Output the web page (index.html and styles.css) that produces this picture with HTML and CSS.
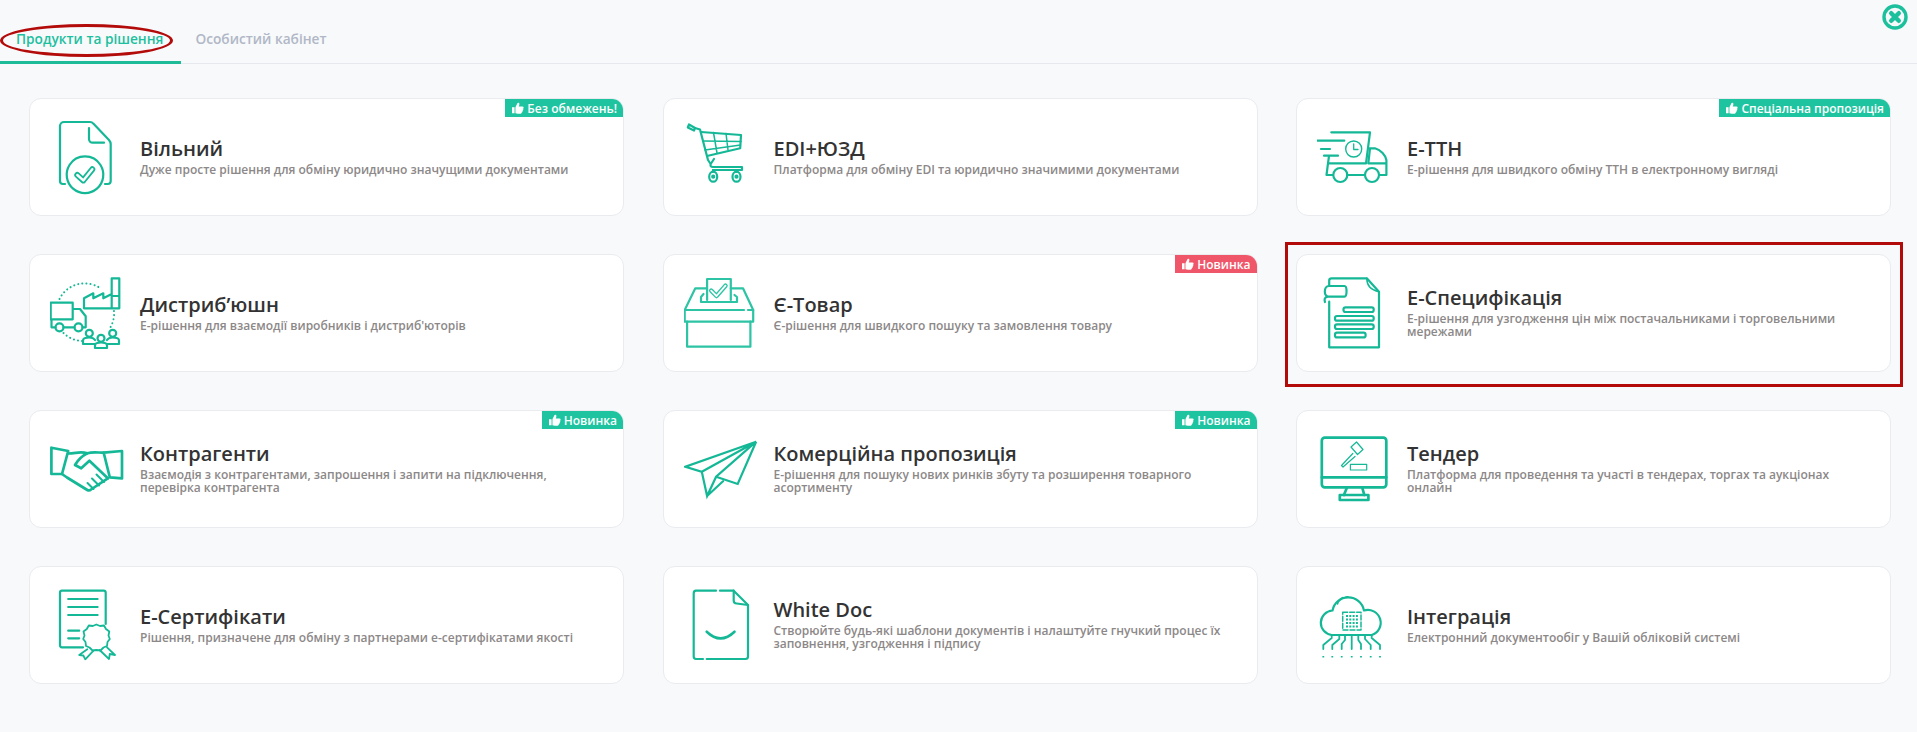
FILE: index.html
```html
<!DOCTYPE html>
<html lang="uk">
<head>
  <meta charset="UTF-8" />
  <meta name="viewport" content="width=device-width, initial-scale=1.0" />
  <title>Продукти та рішення</title>
  <link rel="stylesheet" href="styles.css">
</head>
<body>
  <svg class="defs" width="0" height="0">
    <symbol id="thumb" viewBox="0 0 14 14">
      <path d="M0 6.2h3v7H0z M4 6.2 6.3 1.6C6.8.6 8.4.7 8.6 2.2 8.7 3.400 8.200 4.400 7.800 5.300H12.200C13.800 5.300 14 7.500 12.900 8 13.500 8.900 13.100 10 12.300 10.300 12.600 11.200 12 12.100 11.300 12.300 11.400 13.100 10.800 13.700 10 13.700H7C5.800 13.700 5 13.200 4 13.200Z"/>
    </symbol>
  </svg>

  <div class="tabs">
    <a class="tab tab-active">Продукти та рішення<span class="mark-ellipse"></span></a>
    <a class="tab">Особистий кабінет</a>
    <svg class="close" viewBox="0 0 26 26">
      <circle cx="13" cy="13" r="11" fill="none" stroke="#1cc09c" stroke-width="3.400"/>
      <path d="M9.200 9.200l7.600 7.600M16.800 9.200l-7.600 7.600" fill="none" stroke="#1cc09c" stroke-width="4.400" stroke-linecap="round"/>
    </svg>
  </div>

  <div class="grid">

    <div class="card">
      <span class="badge"><svg class="thumb"><use href="#thumb"/></svg>Без обмежень!</span>
      <svg class="icon" viewBox="0 0 80 80">
        <path d="M15 67h-2a3 3 0 0 1-3-3V9a4 4 0 0 1 4-4h26c1.500 0 2.500.6 3.300 1.600L59 23c1.100 1.300 1.700 2.400 1.700 4V64a3 3 0 0 1-3 3H55"/>
        <path d="M39 11V22a3.700 3.700 0 0 0 3.700 3.700H54"/>
        <path d="M19.500 48A18.300 18.300 0 1 0 50.500 48 18.300 18.300 0 0 0 19.500 48Z"/>
        <path d="M27.300 58 33.300 63.400 42.300 52.300" stroke-width="6" stroke-linejoin="round" stroke-linecap="round"/>
        <path class="inner" d="M27.300 58 33.300 63.400 42.300 52.300" stroke-width="2.400" stroke-linejoin="round" stroke-linecap="round"/>
      </svg>
      <div class="info">
        <div class="name">Вільний</div>
        <div class="desc">Дуже просте рішення для обміну юридично значущими документами</div>
      </div>
    </div>

    <div class="card">
      <svg class="icon" viewBox="0 0 80 80">
        <path d="M5 7.500 11 11 10 13.500 3.800 10.500Z"/>
        <path d="M11 11 16 12.500 24 43 26 46"/>
        <path d="M17 15 57 18 56.200 31.300 23 39"/>
        <path d="M29.500 15.500 33 36M42 16.500 44 33M19 24 57 24.500M21 33 56.500 28" stroke-width="1.500"/>
        <path d="M30 42 27 46.500C25.500 49 27 50 29 50H58V53H29"/>
        <ellipse cx="29.200" cy="59.700" rx="4" ry="5"/>
        <ellipse cx="52.500" cy="59.700" rx="4" ry="5"/>
        <circle cx="29.200" cy="59.700" r="1"/>
        <circle cx="52.500" cy="59.700" r="1"/>
        <path d="M29 53V55M52.500 53V55"/>
      </svg>
      <div class="info">
        <div class="name">EDI+ЮЗД</div>
        <div class="desc">Платформа для обміну EDI та юридично значимими документами</div>
      </div>
    </div>

    <div class="card">
      <span class="badge"><svg class="thumb"><use href="#thumb"/></svg>Спеціальна пропозиція</span>
      <svg class="icon" viewBox="0 0 80 80">
        <path d="M14.300 15.300H53L49 46.300H11L12 39"/>
        <path d="M0 23.700H27.300M4 32H13M7 38.700H21"/>
        <circle cx="36.700" cy="32" r="8" stroke-width="1.400"/>
        <path d="M36.700 27V32.500H41" stroke-width="1.300"/>
        <path d="M52 31.300H58C64 33 68.500 38 69.400 43V58H62M48 58H30M16 58H9.500L11 46.300M53 31.300 51.300 46.300H69"/>
        <circle cx="23.300" cy="58" r="7"/>
        <circle cx="55" cy="58" r="7"/>
      </svg>
      <div class="info">
        <div class="name">Е-ТТН</div>
        <div class="desc">Е-рішення для швидкого обміну ТТН в електронному вигляді</div>
      </div>
    </div>

    <div class="card">
      <svg class="icon" viewBox="0 0 80 80">
        <path d="M.7 29.700H22.700V46.300H.7ZM22.700 36H30L35.700 43.300V54.300H32.500M24.500 54.300H13.500M5.500 54.300H1.500V46.300"/>
        <circle cx="9.500" cy="54.300" r="4"/>
        <circle cx="28.500" cy="54.300" r="4"/>
        <path d="M34 35.300V25.300L43.300 20.300V25.300L53.300 20.300V25.300L61.700 21V35.300H69.300V5.300H61.700V21M34 35.300H61.700M61.700 23H69.300"/>
        <path class="dots" d="M9.500 26A28 28 0 0 1 50 15M64 38A28 28 0 0 1 60 55M13.500 60A28 28 0 0 0 32 68"/>
        <circle cx="39.300" cy="60.300" r="3.500"/>
        <circle cx="51" cy="65.300" r="3.500"/>
        <circle cx="62.700" cy="60.300" r="3.500"/>
        <path d="M33 71V67.500C33 65.500 36 64.500 39.300 64.500 42 64.500 44 65.500 45 67M69 71V67.500C69 65.500 66 64.500 62.700 64.500 60 64.500 58 65.500 57 67M45 75V72.500C45 70.500 48 69.500 51 69.500 54 69.500 57 70.500 57 72.500V75ZM33 71H45M57 71H69"/>
      </svg>
      <div class="info">
        <div class="name">Дистриб’юшн</div>
        <div class="desc">Е-рішення для взаємодії виробників і дистриб'юторів</div>
      </div>
    </div>

    <div class="card">
      <span class="badge badge-red"><svg class="thumb"><use href="#thumb"/></svg>Новинка</span>
      <svg class="icon light" viewBox="0 0 80 80">
        <path d="M3.100 48.700V73.700H66.400V48.700"/>
        <path d="M60 37H.7V48.700H69.200V37H64"/>
        <path d="M.7 37 11.300 15.300H23M46.800 15.300H59L69.200 37"/>
        <path d="M23.100 27V6H46.800V27"/>
        <path d="M19.500 21 17 24V29H53V24L50.500 22"/>
        <path d="M27.200 17.700 32.500 23 41.500 12.700" stroke-width="4.500"/>
        <path class="inner" d="M27.200 17.700 32.500 23 41.500 12.700" stroke-width="1.800"/>
      </svg>
      <div class="info">
        <div class="name">Є-Товар</div>
        <div class="desc">Є-рішення для швидкого пошуку та замовлення товару</div>
      </div>
    </div>

    <div class="card">
      <span class="mark-box"></span>
      <svg class="icon" viewBox="0 0 80 80">
        <path d="M12.200 13V7.500C12.200 6 13.200 5.300 14.700 5.300H49.800L62 18.700V74.300H12.200V28.700"/>
        <path d="M49.800 5.300C49.800 12 53 17 62 18.700" stroke-width="1.500"/>
        <path d="M12 13H27.500C30.200 13 30.200 23.700 27.500 23.700H11.500C7.500 23.700 7 26.500 8 29M11.500 23.700C6.500 23.700 6.500 13 12 13"/>
        <rect x="26.500" y="34.300" width="30.200" height="4.700" rx="2"/>
        <rect x="18" y="43" width="38.700" height="4.700" rx="2"/>
        <rect x="18" y="51.300" width="38.700" height="4.700" rx="2"/>
        <rect x="18" y="59.700" width="30.600" height="4.700" rx="2"/>
      </svg>
      <div class="info">
        <div class="name">Е-Специфікація</div>
        <div class="desc">Е-рішення для узгодження цін між постачальниками і торговельними мережами</div>
      </div>
    </div>

    <div class="card">
      <span class="badge"><svg class="thumb"><use href="#thumb"/></svg>Новинка</span>
      <svg class="icon thick" viewBox="0 0 80 80">
        <path d="M1.400 18.700 18.200 22 12 45H1.400Z"/>
        <path d="M72 22 53.700 23.700 59.800 48.300 72 49.300Z"/>
        <path d="M12 45 17 48.500 37.300 61C39 62 40 61.500 41 60.500L57.800 49.300"/>
        <path d="M18.200 24.500C26 24.500 30 22 37.300 24.300 43 22.500 48 23.700 53.700 23.700"/>
        <path d="M37.300 24.300C32 27 28 31 25 36L31.200 39.300 39.400 31.700 57.800 49.300"/>
        <path d="M43.500 60 37.500 54M49 56.500 42 49.500M54 53 46.500 45.500" stroke-width="2"/>
      </svg>
      <div class="info">
        <div class="name">Контрагенти</div>
        <div class="desc">Взаємодія з контрагентами, запрошення і запити на підключення, перевірка контрагента</div>
      </div>
    </div>

    <div class="card">
      <span class="badge"><svg class="thumb"><use href="#thumb"/></svg>Новинка</span>
      <svg class="icon" viewBox="0 0 80 80">
        <path d="M72.100 12.700 1.500 37.700 17.800 42.700ZM17.800 42.700 23.100 67 32.100 47.700 72.100 12.700 53.700 55 32.100 47.700M23.100 67 39 52.300" stroke-linejoin="miter"/>
      </svg>
      <div class="info">
        <div class="name">Комерційна пропозиція</div>
        <div class="desc">Е-рішення для пошуку нових ринків збуту та розширення товарного асортименту</div>
      </div>
    </div>

    <div class="card">
      <svg class="icon thick" viewBox="0 0 80 80">
        <rect x="4.800" y="8.700" width="64.500" height="49.600" rx="3"/>
        <path d="M4.800 48.300H69.300M30.100 58.300 26.900 66M45.200 58.300 47.300 66"/>
        <rect x="22.800" y="66" width="28.600" height="5"/>
        <g class="thin">
          <path d="M34 18 39.500 13 46 20.500 40.500 25.500ZM35.800 24.500 24.500 36.500 26 38 38 27.500"/>
          <rect x="33.400" y="35.300" width="16.300" height="5.700"/>
        </g>
      </svg>
      <div class="info">
        <div class="name">Тендер</div>
        <div class="desc">Платформа для проведення та участі в тендерах, торгах та аукціонах онлайн</div>
      </div>
    </div>

    <div class="card">
      <svg class="icon" viewBox="0 0 80 80">
        <path d="M55.700 39V7.700C55.700 6.500 55 5.700 53.700 5.700H12C10.700 5.700 10 6.500 10 7.700V60.300C10 61.500 10.700 62.300 12 62.300H33"/>
        <path d="M18.200 14H47.600M18.200 22H47.600M18.200 30H47.600M18.200 45.700H29.200M18.200 53.300H29.200"/>
        <path d="M46.300 39.500 50 41 54 40.500 56 44 59.300 46.500 58.500 50.500 59.800 54 57.500 57 57 61 53.500 62.500 50.500 65.500 46.300 65 42.500 65.500 39.500 62.500 36 61 35.500 57 33.200 54 34.500 50.500 33.500 46.500 36.800 44 38.800 40.500 42.800 41Z" stroke-width="1.800"/>
        <path d="M37.300 64.300 29.200 70 33.300 70.500 35.300 74.300 43.500 65.700M49.600 65 59 74 59.800 69 65 70 57 62.300" stroke-width="1.800"/>
      </svg>
      <div class="info">
        <div class="name">Е-Сертифікати</div>
        <div class="desc">Рішення, призначене для обміну з партнерами е-сертифікатами якості</div>
      </div>
    </div>

    <div class="card">
      <svg class="icon" viewBox="0 0 80 80">
        <path d="M32 5.700H12A2.500 2.500 0 0 0 9.700 8.200V71.500A2.500 2.500 0 0 0 12 74H19M22.700 74H61.500A2.500 2.500 0 0 0 64 71.500V20L49.700 5.700H36"/>
        <path d="M49.700 5.700V15.500A3 3 0 0 0 52.700 18.500L64 20"/>
        <path d="M22.700 46.700Q36.600 60 50.500 46.700" stroke-width="2.600"/>
      </svg>
      <div class="info">
        <div class="name">White Doc</div>
        <div class="desc">Створюйте будь-які шаблони документів і налаштуйте гнучкий процес їх заповнення, узгодження і підпису</div>
      </div>
    </div>

    <div class="card">
      <svg class="icon" viewBox="0 0 80 80">
        <path d="M14.700 50A12.300 12.300 0 0 1 15.500 25.500 16 16 0 0 1 47 25.500 12.500 12.500 0 0 1 54.700 50Z"/>
        <path d="M20.500 19A10.500 10.500 0 0 1 26 12.500M29 12 31 11.800" stroke-width="1.500"/>
        <rect class="dash" x="25.700" y="27.300" width="18.300" height="17.700"/>
        <path class="grid-dots" d="M29 31H41M29 34.500H41M29 38H41M29 41.500H41"/>
        <path d="M14.700 50V53L6.300 60V64M22.300 50V54L15.300 60V64M28 50V55L24.700 59V64M34.700 50V64M41.300 50V55L44 59V64M48 50V54L53.700 60V64M54.700 50V53L63 60V64" stroke-width="1.800"/>
        <path class="pins" d="M6.300 71V72.500M15.300 71V72.500M24.700 71V72.500M34.700 71V72.500M44 71V72.500M53.700 71V72.500M63 71V72.500"/>
      </svg>
      <div class="info">
        <div class="name">Інтеграція</div>
        <div class="desc">Електронний документообіг у Вашій обліковій системі</div>
      </div>
    </div>

  </div>
</body>
</html>
```

FILE: styles.css
```css
* {
  box-sizing: border-box;
}
body {
  margin: 0;
  min-height: 100vh;
  font-family: "Open Sans", "Noto Sans", sans-serif;
  background: #f8f9fb;
  overflow: hidden;
}
.defs {
  display: none;
}
.tabs {
  position: relative;
  display: flex;
  align-items: flex-end;
  height: 64px;
  border-bottom: 1px solid #e6e8ee;
}
.tab {
  position: relative;
  padding: 0 18px 12px 14px;
  height: 64px;
  display: flex;
  align-items: flex-end;
  font-size: 13.700px;
  font-weight: 600;
  line-height: 20px;
  color: #b0b7c6;
  margin-bottom: -1px;
  border-bottom: 3px solid transparent;
}
.tab-active {
  padding-left: 16px;
  color: #1dbf9f;
  border-bottom-color: #1dbb98;
}
.close {
  position: absolute;
  top: 4px;
  right: 9px;
  width: 26px;
  height: 26px;
}
.mark-ellipse {
  position: absolute;
  left: 0;
  top: 24px;
  width: 173px;
  height: 33px;
  border: 3px solid #b30a0a;
  border-radius: 50%;
}
.grid {
  display: grid;
  grid-template-columns: repeat(3, 595px);
  grid-auto-rows: 118px;
  gap: 38px 38.500px;
  padding: 34px 0 0 29px;
}
.card {
  position: relative;
  display: flex;
  align-items: center;
  gap: 10px;
  padding: 0 14px 0 20px;
  background: #fff;
  border: 1px solid #e9ebef;
  border-radius: 12px;
}
.mark-box {
  position: absolute;
  top: -13px;
  left: -12px;
  right: -13px;
  bottom: -16px;
  border: 3px solid #b30a0a;
}
.badge {
  position: absolute;
  top: 0;
  right: 0;
  display: flex;
  align-items: center;
  gap: 3px;
  height: 18px;
  padding: 0 6px 0 7px;
  font-size: 12px;
  font-weight: 600;
  color: #fff;
  background: #1dc49f;
  border-top-right-radius: 11px;
}
.badge-red {
  background: #f0566a;
}
.thumb {
  width: 12px;
  height: 12px;
  fill: #fff;
}
.icon {
  flex: none;
  width: 80px;
  height: 80px;
  fill: none;
  stroke: #14b896;
  stroke-width: 2.200;
  stroke-linecap: round;
  stroke-linejoin: round;
}
.icon.light {
  stroke: #2cc4a4;
}
.icon.thick {
  stroke-width: 2.700;
}
.icon .inner {
  stroke: #fff;
}
.icon .dots {
  stroke-width: 2;
  stroke-dasharray: .1 4;
}
.icon .thin {
  stroke-width: 1.200;
}
.icon .dash {
  stroke-width: 1.500;
  stroke-dasharray: 5 2;
}
.icon .grid-dots {
  stroke-width: 2;
  stroke-linecap: butt;
  stroke-dasharray: 2 1.300;
}
.icon .pins {
  stroke-width: 1.800;
  stroke-linecap: butt;
}
.info {
  flex: 1;
  min-width: 0;
  padding-bottom: 4px;
}
.name {
  font-size: 20px;
  font-weight: 600;
  line-height: 27px;
  margin-bottom: 1px;
  color: #333;
}
.desc {
  font-size: 12px;
  font-weight: 600;
  line-height: 13px;
  color: #8c8888;
}
```
